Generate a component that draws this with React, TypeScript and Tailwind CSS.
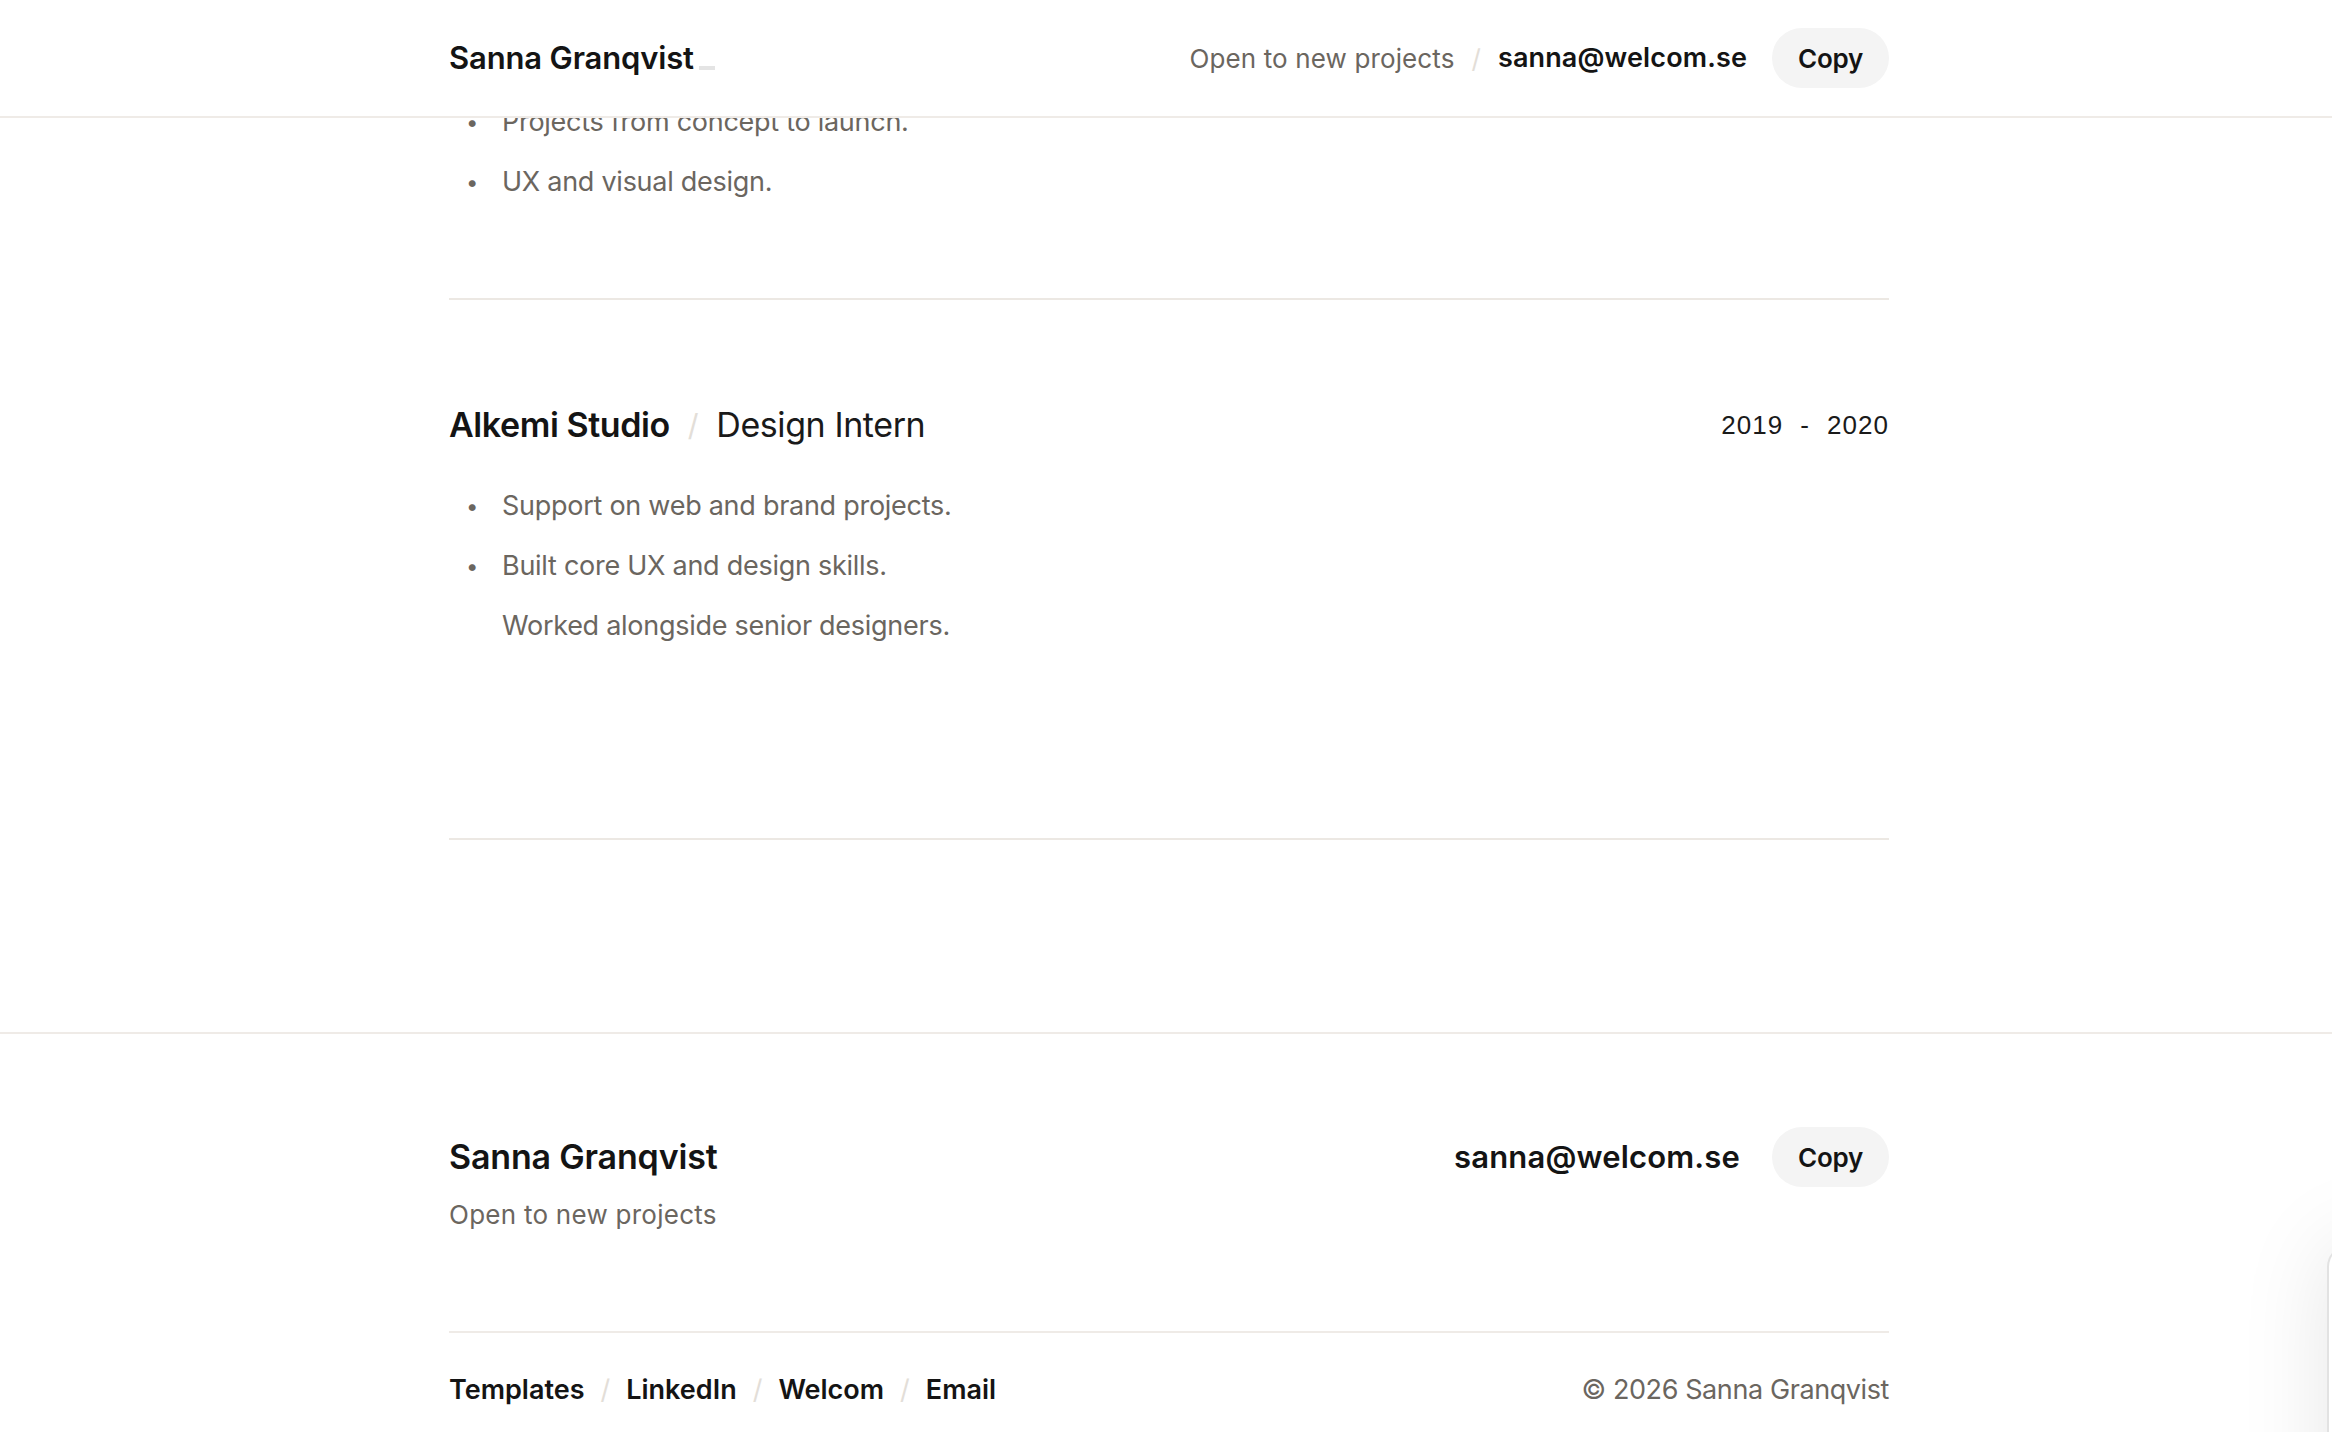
import { useState } from "react";

const EMAIL = "sanna@welcom.se";

interface Role {
  company: string;
  title: string;
  from: string;
  to: string;
  points: { text: string; bullet: boolean }[];
}

const current: Role = {
  company: "Alkemi Studio",
  title: "Design Intern",
  from: "2019",
  to: "2020",
  points: [
    { text: "Support on web and brand projects.", bullet: true },
    { text: "Built core UX and design skills.", bullet: true },
    { text: "Worked alongside senior designers.", bullet: false },
  ],
};

const footerLinks = ["Templates", "LinkedIn", "Welcom", "Email"];

function Slash({ className = "" }: { className?: string }) {
  return <span className={`text-[#e3ded8] ${className}`}>/</span>;
}

function CopyButton() {
  const [copied, setCopied] = useState(false);
  return (
    <button
      type="button"
      onClick={() => {
        navigator.clipboard?.writeText(EMAIL).catch(() => {});
        setCopied(true);
        setTimeout(() => setCopied(false), 1500);
      }}
      className="flex h-[60px] w-[117px] items-center justify-center rounded-full bg-[#f4f4f4] text-[26px] font-semibold tracking-[-0.01em] text-[#141414]"
    >
      {copied ? "Copied" : "Copy"}
    </button>
  );
}

function PointList({ points }: { points: Role["points"] }) {
  return (
    <ul className="flex flex-col gap-4 pl-[17px]">
      {points.map((p) => (
        <li
          key={p.text}
          className="flex items-center text-[27px] leading-[44px] tracking-[-0.01em] text-[#6b665f]"
        >
          <span className="w-[36px] shrink-0 text-[22px] text-[#6b665f]">
            {p.bullet ? "•" : ""}
          </span>
          {p.text}
        </li>
      ))}
    </ul>
  );
}

export default function App() {
  return (
    <div
      className="relative h-[1432px] overflow-hidden bg-white text-[#141414]"
      style={{ fontFamily: "Inter, 'Noto Sans', sans-serif" }}
    >
      <header className="absolute inset-x-0 top-0 z-10 h-[118px] border-b-2 border-[#efebe7] bg-white">
        <div className="mx-auto flex h-full w-[1440px] translate-x-[3px] items-center justify-between">
          <div className="flex items-end">
            <span className="text-[31px] font-semibold leading-[40px] tracking-[-0.005em]">
              Sanna Granqvist
            </span>
            <span className="mb-[8px] ml-[5px] inline-block h-[4px] w-[16px] bg-[#e4e4e4]" />
          </div>
          <div className="flex items-center">
            <span className="text-[26px] tracking-[0.005em] text-[#6b665f]">
              Open to new projects
            </span>
            <Slash className="mx-[17px] text-[26px]" />
            <span className="text-[27px] font-semibold tracking-[0.005em]">
              {EMAIL}
            </span>
            <div className="ml-[25px]">
              <CopyButton />
            </div>
          </div>
        </div>
      </header>

      <main className="mx-auto w-[1440px] translate-x-[3px] pt-[100px]">
        <PointList
          points={[
            { text: "Projects from concept to launch.", bullet: true },
            { text: "UX and visual design.", bullet: true },
          ]}
        />
        <div className="mt-[94px] border-t-2 border-[#ece8e3]" />

        <section className="pt-[101px]">
          <div className="flex items-center justify-between">
            <h2 className="flex items-center text-[34px] leading-[48px] tracking-[-0.012em]">
              <span className="font-semibold">{current.company}</span>
              <Slash className="mx-[18px] text-[30px]" />
              <span className="font-normal text-[#1a1a1a]">{current.title}</span>
            </h2>
            <div
              className="flex gap-[17px] text-[26px] tracking-[0.04em] text-[#1a1a1a]"
              style={{ fontFamily: "'Liberation Sans', Arial, sans-serif" }}
            >
              <span>{current.from}</span>
              <span>-</span>
              <span>{current.to}</span>
            </div>
          </div>
          <div className="mt-[35px]">
            <PointList points={current.points} />
          </div>
        </section>
        <div className="mt-[190px] border-t-2 border-[#ece8e3]" />
      </main>

      <footer className="mt-[192px] border-t-2 border-[#efebe7]">
        <div className="mx-auto w-[1440px] translate-x-[3px] pt-[93px]">
          <div className="flex items-start justify-between">
            <div>
              <div className="text-[34px] font-semibold leading-[60px] tracking-[-0.005em]">
                Sanna Granqvist
              </div>
              <div className="mt-[10px] text-[26px] leading-[36px] tracking-[0.01em] text-[#6b665f]">
                Open to new projects
              </div>
            </div>
            <div className="flex items-center gap-[32px]">
              <span className="text-[31px] font-semibold tracking-[0.005em]">
                {EMAIL}
              </span>
              <CopyButton />
            </div>
          </div>

          <div className="mt-[98px] border-t-2 border-[#efebe7]" />

          <div className="flex items-center justify-between pt-[37px]">
            <nav className="flex items-center text-[27px] font-semibold leading-[40px] tracking-[0em]">
              {footerLinks.map((link, i) => (
                <span key={link} className="flex items-center">
                  {i > 0 && <Slash className="mx-[16px] font-normal" />}
                  <a href="#">{link}</a>
                </span>
              ))}
            </nav>
            <span className="text-[27px] leading-[40px] tracking-[-0.015em] text-[#6b665f]">
              © 2026 Sanna Granqvist
            </span>
          </div>
        </div>
      </footer>

      {/* side drawer peeking in from the right edge */}
      <div className="absolute left-[2327px] top-[1245px] h-[400px] w-[320px] rounded-tl-[22px] border-l-2 border-t border-[#e2e2e2] bg-white shadow-[0_0_90px_rgba(0,0,0,0.10)]" />
    </div>
  );
}
